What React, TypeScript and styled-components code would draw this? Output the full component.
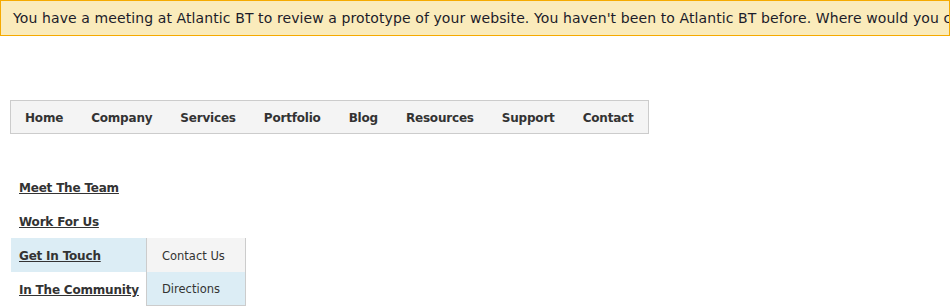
import styled, { createGlobalStyle } from "styled-components";

const GlobalStyle = createGlobalStyle`
  body {
    margin: 0;
    background: #fff;
    font-family: "DejaVu Sans", Verdana, sans-serif;
  }
`;

const mainLinks = ["Home", "Company", "Services", "Portfolio", "Blog", "Resources", "Support", "Contact"];

const subLinks = [
  { label: "Meet The Team" },
  { label: "Work For Us" },
  { label: "Get In Touch", children: ["Contact Us", "Directions"] },
  { label: "In The Community" },
];

function App() {
  return (
    <>
      <GlobalStyle />
      <Banner>
        You have a meeting at Atlantic BT to review a prototype of your website. You haven't been to
        Atlantic BT before. Where would you click to find directions?
      </Banner>
      <Page>
        <NavBar>
          {mainLinks.map((l) => (
            <NavItem key={l}>{l}</NavItem>
          ))}
        </NavBar>
        <SubMenu>
          {subLinks.map((s) => (
            <SubItem key={s.label} $active={!!s.children}>
              <SubLink href="#">{s.label}</SubLink>
              {s.children && (
                <Dropdown>
                  {s.children.map((c, i) => (
                    <DropItem key={c} $hover={i === 1}>
                      {c}
                    </DropItem>
                  ))}
                </Dropdown>
              )}
            </SubItem>
          ))}
        </SubMenu>
      </Page>
    </>
  );
}
export default App;

const Banner = styled.div`
  box-sizing: border-box;
  width: 950px;
  height: 36px;
  padding: 0 12px;
  line-height: 34px;
  background: #faebbb;
  border: 1px solid #f5aa00;
  color: #1c1c2a;
  font-size: 14px;
  letter-spacing: 0.1px;
  white-space: nowrap;
  overflow: hidden;
`;

const Page = styled.div`
  padding: 64px 0 0 10px;
`;

const NavBar = styled.ul`
  display: inline-flex;
  align-items: center;
  margin: 0;
  padding: 0;
  list-style: none;
  height: 32px;
  border: 1px solid #cccccc;
  background: #f4f4f4;
`;

const NavItem = styled.li`
  padding: 1px 14px 0;
  font-size: 12px;
  font-weight: bold;
  letter-spacing: -0.2px;
  color: #333333;
`;

const SubMenu = styled.ul`
  margin: 36px 0 0 1px;
  padding: 0;
  list-style: none;
`;

const SubItem = styled.li<{ $active?: boolean }>`
  position: relative;
  box-sizing: border-box;
  width: 135px;
  height: 34px;
  padding: 2px 0 0 8px;
  display: flex;
  align-items: center;
  background: ${(p) => (p.$active ? "#dcedf5" : "transparent")};
`;

const SubLink = styled.a`
  font-size: 12px;
  font-weight: bold;
  letter-spacing: -0.2px;
  color: #333333;
  white-space: nowrap;
`;

const Dropdown = styled.ul`
  position: absolute;
  left: 135px;
  top: 0;
  width: 98px;
  margin: 0;
  padding: 0;
  list-style: none;
  border: 1px solid #cccccc;
  border-top: none;
`;

const DropItem = styled.li<{ $hover?: boolean }>`
  height: ${(p) => (p.$hover ? "33px" : "34px")};
  display: flex;
  align-items: center;
  padding: 1px 0 0 15px;
  box-sizing: border-box;
  font-size: 11.5px;
  color: #333333;
  background: ${(p) => (p.$hover ? "#dcedf5" : "#f4f4f4")};
`;
